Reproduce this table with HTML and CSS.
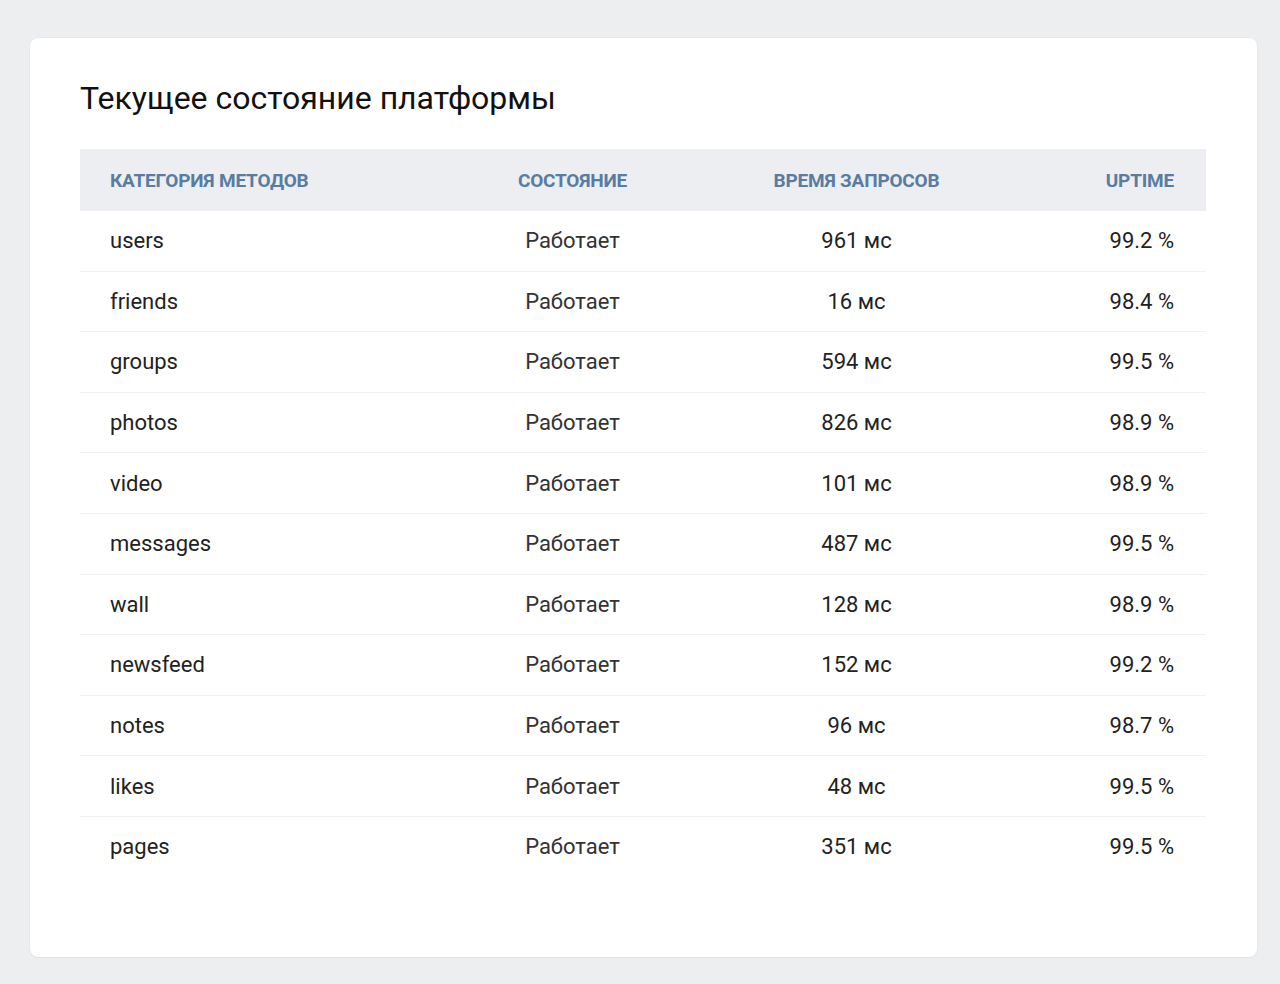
FILE: index.html
```html
<!DOCTYPE html>
<html lang="ru">
<head>
<meta charset="utf-8">
<title>Текущее состояние платформы</title>
<link rel="stylesheet" href="styles.css">
</head>
<body>
<div class="card">
  <h1 class="title">Текущее состояние платформы</h1>
  <table class="status">
    <thead>
      <tr>
        <th class="c1">Категория методов</th>
        <th class="c2">Состояние</th>
        <th class="c3">Время запросов</th>
        <th class="c4">Uptime</th>
      </tr>
    </thead>
    <tbody>
      <tr><td class="c1">users</td><td class="c2">Работает</td><td class="c3">961 мс</td><td class="c4">99.2 %</td></tr>
      <tr><td class="c1">friends</td><td class="c2">Работает</td><td class="c3">16 мс</td><td class="c4">98.4 %</td></tr>
      <tr><td class="c1">groups</td><td class="c2">Работает</td><td class="c3">594 мс</td><td class="c4">99.5 %</td></tr>
      <tr><td class="c1">photos</td><td class="c2">Работает</td><td class="c3">826 мс</td><td class="c4">98.9 %</td></tr>
      <tr><td class="c1">video</td><td class="c2">Работает</td><td class="c3">101 мс</td><td class="c4">98.9 %</td></tr>
      <tr><td class="c1">messages</td><td class="c2">Работает</td><td class="c3">487 мс</td><td class="c4">99.5 %</td></tr>
      <tr><td class="c1">wall</td><td class="c2">Работает</td><td class="c3">128 мс</td><td class="c4">98.9 %</td></tr>
      <tr><td class="c1">newsfeed</td><td class="c2">Работает</td><td class="c3">152 мс</td><td class="c4">99.2 %</td></tr>
      <tr><td class="c1">notes</td><td class="c2">Работает</td><td class="c3">96 мс</td><td class="c4">98.7 %</td></tr>
      <tr><td class="c1">likes</td><td class="c2">Работает</td><td class="c3">48 мс</td><td class="c4">99.5 %</td></tr>
      <tr><td class="c1">pages</td><td class="c2">Работает</td><td class="c3">351 мс</td><td class="c4">99.5 %</td></tr>
    </tbody>
  </table>
</div>
</body>
</html>
```
FILE: styles.css
```css
html, body {
  margin: 0;
  padding: 0;
}
body {
  background: #edeeef;
  font-family: Roboto, "Noto Sans", sans-serif;
  color: #222;
  padding: 38px 23px 27px 30px;
}
.card {
  background: #fff;
  border-radius: 8px;
  box-shadow: 0 1px 0 0 #dfe1e4, 0 0 0 1px #e7e8ec;
  padding: 36px 51px 80px 50px;
}
.title {
  margin: 0 0 27px 0;
  font-size: 32px;
  font-weight: 400;
  line-height: 48px;
  color: #111;
}
.status {
  width: 100%;
  border-collapse: collapse;
  table-layout: fixed;
}
.status th {
  background: #eceef1;
  height: 62px;
  font-size: 19px;
  font-weight: 700;
  text-transform: uppercase;
  color: #5a7ca0;
  padding: 0 30px;
  letter-spacing: -0.2px;
}
.status th.c4 {
  padding-right: 32px;
}
.status td {
  height: 59.6px;
  font-size: 22px;
  padding: 0 30px;
  border-bottom: 1px solid #eef0f2;
  color: #222;
}
.status td.c4 {
  padding-right: 32px;
}
.status tbody tr:last-child td {
  border-bottom: none;
}
.c1 { width: 315px; text-align: left; }
.c2 { width: 175px; text-align: center; }
.c3 { width: 273px; text-align: center; }
.c4 { text-align: right; }
.status td.c2 { color: #333; }
```
